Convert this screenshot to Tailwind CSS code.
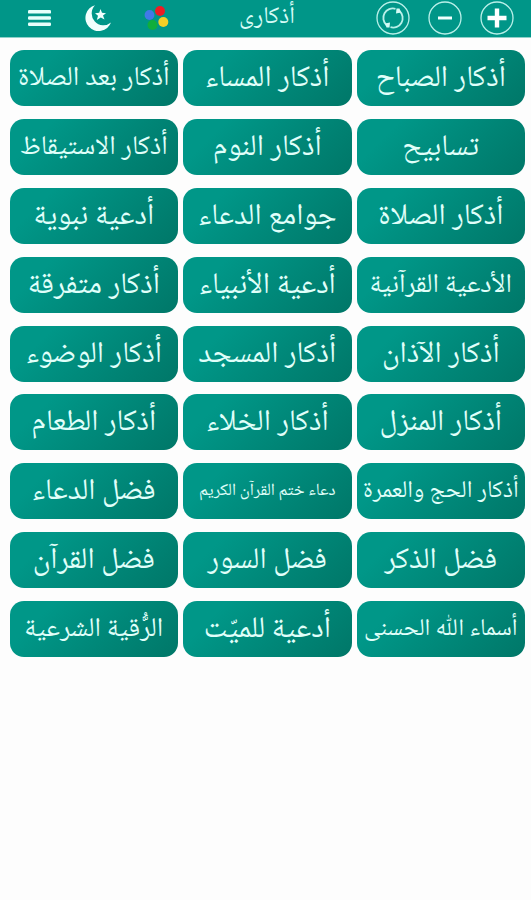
<!DOCTYPE html>
<html lang="ar">
  <head>
    <meta charset="UTF-8" />
    <meta name="viewport" content="width=device-width, initial-scale=1.0" />
    <title>أذكارى</title>
    <script src="https://cdn.jsdelivr.net/npm/@tailwindcss/browser@4"></script>
  </head>
  <body class="bg-[#fdfdfd] font-['Noto_Naskh_Arabic','DejaVu_Sans',sans-serif]">
    <header class="flex h-[38px] items-center bg-[#009688] border-b border-[#8fd0c9] pb-[2px] text-[#d5fbf6]">
      <button class="ml-[28px]">
        <svg class="block" width="23" height="18" viewBox="0 0 23 18" fill="#e6fffb">
          <rect y="1" width="23" height="3.6" rx="1.2" />
          <rect y="7.2" width="23" height="3.6" rx="1.2" />
          <rect y="13.4" width="23" height="3.6" rx="1.2" />
        </svg>
      </button>
      <button class="ml-[33px]">
        <svg class="block" width="28" height="28" viewBox="0 0 28 28" fill="#f1fffd">
          <path d="M11 1.200A13.200 13.200 0 1 0 27 18.500A11.800 11.800 0 0 1 11 1.200Z" />
          <path d="M16.500 5L18 8.800L22 9.200L19 11.600L20.500 15.600L16.800 13.400L12.800 16L14 11.800L11 9.200L15.200 8.800Z" />
        </svg>
      </button>
      <button class="ml-[32px]">
        <svg class="block" width="26" height="26" viewBox="0 0 26 26">
          <circle cx="5.500" cy="10" r="4.900" fill="#4179e8" />
          <circle cx="16" cy="6" r="5" fill="#ec1c24" />
          <circle cx="8.500" cy="20" r="5" fill="#0fae3c" />
          <circle cx="19.300" cy="17" r="5" fill="#f5cf26" />
        </svg>
      </button>
      <h1 dir="rtl" class="ml-[56px] w-[82px] pt-[1px] text-center text-[24px] leading-[36px] whitespace-nowrap">أذكارى</h1>
      <div class="ml-auto mr-[17px] flex gap-[18px]">
        <button>
          <svg class="block" width="34" height="34" viewBox="0 0 34 34" fill="none" stroke="#b9f0e9" stroke-width="1.300">
            <circle cx="17" cy="17" r="16" />
            <path stroke-width="1.800" d="M10.500 24A9.500 9.500 0 0 1 19.500 7.800M23.500 10A9.500 9.500 0 0 1 14.500 26.200" />
            <path fill="#d5fbf6" stroke="none" d="M9 22.500L14 21.500L13.500 26.500L10.500 26.500ZM25 11.500L20 12.500L20.500 7.500L23.500 7.500Z" />
          </svg>
        </button>
        <button>
          <svg class="block" width="34" height="34" viewBox="0 0 34 34" fill="none" stroke="#b9f0e9" stroke-width="1.300">
            <circle cx="17" cy="17" r="16" />
            <path stroke="#f1fffd" stroke-width="3" d="M10 17H24" />
          </svg>
        </button>
        <button>
          <svg class="block" width="34" height="34" viewBox="0 0 34 34" fill="none" stroke="#b9f0e9" stroke-width="1.300">
            <circle cx="17" cy="17" r="16" />
            <path stroke="#fff" stroke-width="4.400" d="M7.500 17H26.500M17 7.500V26.500" />
          </svg>
        </button>
      </div>
    </header>

    <main
      dir="rtl"
      class="grid grid-cols-[repeat(3,168.500px)] auto-rows-[56px] gap-x-[5px] gap-y-[12.900px] pt-[12px] pr-[6px] text-[30px] leading-[52px] text-[#e0fffa] whitespace-nowrap *:flex *:items-start *:justify-center *:pt-[4px] *:rounded-[14px] *:bg-linear-135 *:from-[#009788] *:from-20% *:to-[#007768]"
    >
      <button>أذكار الصباح</button>
      <button>أذكار المساء</button>
      <button class="text-[27.300px] leading-[50px]">أذكار بعد الصلاة</button>

      <button>تسابيح</button>
      <button>أذكار النوم</button>
      <button class="text-[27px] leading-[50px]">أذكار الاستيقاظ</button>

      <button>أذكار الصلاة</button>
      <button>جوامع الدعاء</button>
      <button>أدعية نبوية</button>

      <button class="text-[27px] leading-[50px]">الأدعية القرآنية</button>
      <button>أدعية الأنبياء</button>
      <button>أذكار متفرقة</button>

      <button>أذكار الآذان</button>
      <button>أذكار المسجد</button>
      <button>أذكار الوضوء</button>

      <button>أذكار المنزل</button>
      <button>أذكار الخلاء</button>
      <button>أذكار الطعام</button>

      <button class="text-[24px] leading-[50px]">أذكار الحج والعمرة</button>
      <button class="text-[17px] leading-[50px]">دعاء ختم القرآن الكريم</button>
      <button>فضل الدعاء</button>

      <button>فضل الذكر</button>
      <button>فضل السور</button>
      <button>فضل القرآن</button>

      <button class="text-[24px] leading-[50px]">أسماء اللّٰه الحسنى</button>
      <button>أدعية للميّت</button>
      <button class="text-[27px] leading-[50px]">الرُّقية الشرعية</button>
    </main>
  </body>
</html>
